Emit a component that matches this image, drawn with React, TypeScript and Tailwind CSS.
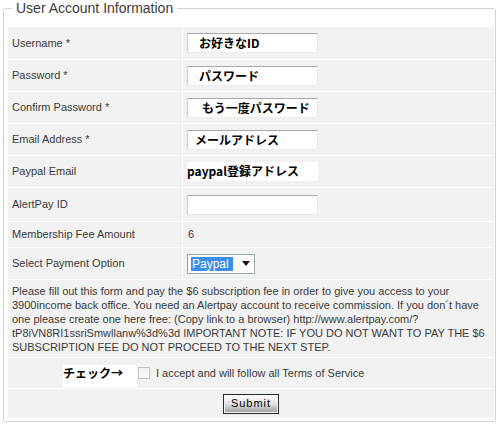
import React from 'react';

const jp = { fontFamily: '"Noto Sans CJK JP", "Liberation Sans", sans-serif' };

const FieldBox: React.FC<{ text?: string; indent?: string; plain?: boolean }> = ({ text = '', indent = 'pl-[11px]', plain }) => (
    <div
        style={jp}
        className={
            'w-[131px] h-[20px] bg-white flex items-center text-[12px] font-bold text-black leading-none ' +
            indent +
            (plain
                ? ' border-b border-[#f0f0f0]'
                : ' border border-t-[#a9a9a9] border-l-[#cfcfcf] border-r-[#e6e6e6] border-b-[#ececec]')
        }
    >
        {text}
    </div>
);

const Row: React.FC<{ label: string; h: string; children?: React.ReactNode }> = ({ label, h, children }) => (
    <div className={'grid grid-cols-[174px_1fr] gap-x-[1px] ' + h}>
        <div className="bg-[#f2f2f2] flex items-center pl-[4px] text-[11px] text-[#3a3a3a]">{label}</div>
        <div className="bg-[#f2f2f2] flex items-center pl-[4px] text-[11px] text-[#3a3a3a]">{children}</div>
    </div>
);

const App: React.FC = () => {
    return (
        <div className="w-[500px] h-[426px] bg-white" style={{ fontFamily: '"Liberation Sans", Arial, sans-serif' }}>
            <fieldset className="ml-[3px] w-[493px] border border-[#d2d2d2] rounded-[3px] pl-[4px] pr-[1px] pt-[11px] pb-[3px]">
                <legend className="ml-[4px] px-[4px] text-[14px] leading-[16px] text-[#3a3a3a]">User Account Information</legend>
                <div className="flex flex-col gap-[1px]">
                    <Row label="Username *" h="h-[32px]">
                        <FieldBox text="お好きなID" />
                    </Row>
                    <Row label="Password *" h="h-[31px]">
                        <FieldBox text="パスワード" indent="pl-[11px]" />
                    </Row>
                    <Row label="Confirm Password *" h="h-[31px]">
                        <FieldBox text="もう一度パスワード" indent="pl-[14px]" />
                    </Row>
                    <Row label="Email Address *" h="h-[31px]">
                        <FieldBox text="メールアドレス" indent="pl-[7px]" />
                    </Row>
                    <Row label="Paypal Email" h="h-[31px]">
                        <FieldBox text="paypal登録アドレス" indent="pl-0" plain />
                    </Row>
                    <Row label="AlertPay ID" h="h-[33px]">
                        <FieldBox />
                    </Row>
                    <Row label="Membership Fee Amount" h="h-[25px]">
                        <span className="pl-[1px]">6</span>
                    </Row>
                    <Row label="Select Payment Option" h="h-[31px]">
                        <div className="w-[68px] h-[20px] bg-white border border-[#9aa6b8] flex items-center pl-[3px] pr-[3px] justify-between">
                            <span className="bg-[#3d8ee8] text-white text-[12px] leading-[14px] w-[42px] pl-[1px]">Paypal</span>
                            <svg width="8" height="5" viewBox="0 0 8 5" className="mr-[1px]">
                                <path d="M0 0H8L4 5Z" fill="#111" />
                            </svg>
                        </div>
                    </Row>
                    <div className="h-[77px] bg-[#f2f2f2] pl-[4px] pt-[4px] text-[11px] leading-[14px] text-[#3a3a3a] whitespace-nowrap">
                        Please fill out this form and pay the $6 subscription fee in order to give you access to your
                        <br />
                        3900income back office. You need an Alertpay account to receive commission. If you don´t have
                        <br />
                        one please create one here free: (Copy link to a browser) http://www.alertpay.com/?
                        <br />
                        tP8iVN8RI1ssriSmwllanw%3d%3d IMPORTANT NOTE: IF YOU DO NOT WANT TO PAY THE $6
                        <br />
                        SUBSCRIPTION FEE DO NOT PROCEED TO THE NEXT STEP.
                    </div>
                    <div className="h-[30px] bg-[#f2f2f2] flex items-center pl-[55px]">
                        <div
                            style={jp}
                            className="w-[74px] h-[22px] mt-[5px] bg-white text-[12px] font-bold text-black leading-none pt-[2px]"
                        >
                            チェック→
                        </div>
                        <span className="w-[12px] h-[12px] border border-[#c4c4c4] bg-gradient-to-br from-[#f0f0f0] to-[#fafafa] ml-[1px]" />
                        <span className="ml-[6px] text-[11px] text-[#3a3a3a]">I accept and will follow all Terms of Service</span>
                    </div>
                    <div className="h-[29px] bg-[#f2f2f2] flex items-center justify-center">
                        <button
                            type="button"
                            className="w-[56px] h-[20px] border border-[#2a2a2a] bg-gradient-to-b from-[#ffffff] via-[#e2e2e2] to-[#9c9c9c] text-[11px] tracking-[1px] text-black leading-none shadow-[inset_0_0_0_1px_#f4f4f4]"
                        >
                            Submit
                        </button>
                    </div>
                </div>
            </fieldset>
        </div>
    );
};

export default App;
